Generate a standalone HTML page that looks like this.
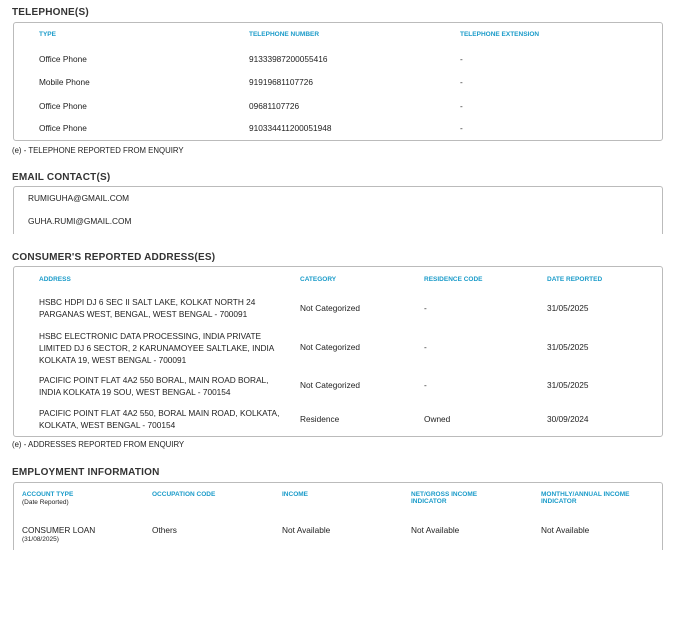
<!DOCTYPE html><html><head><style>
body{margin:0;width:676px;height:632px;background:#fff;font-family:"Liberation Sans",sans-serif;color:#222;position:relative;overflow:hidden}
div{position:absolute;white-space:nowrap}
.h{font-size:10px;font-weight:bold;letter-spacing:.2px;color:#333}
.box{border:1px solid #bbb;border-radius:3px;left:13px;width:648px}
.c{font-size:6.5px;font-weight:bold;color:#1a9bc9;line-height:7px}
.t{font-size:8.3px;line-height:12px}
.n{font-size:7.8px}
</style></head><body>
<div class="h" style="left:12px;top:7px">TELEPHONE(S)</div>
<div class="box" style="top:22px;height:117px"></div>
<div class="c" style="left:39px;top:31px">TYPE</div>
<div class="c" style="left:249px;top:31px">TELEPHONE NUMBER</div>
<div class="c" style="left:460px;top:31px">TELEPHONE EXTENSION</div>
<div class="t" style="left:39px;top:53px">Office Phone</div><div class="t" style="left:249px;top:53px">91333987200055416</div><div class="t" style="left:460px;top:53px">-</div>
<div class="t" style="left:39px;top:76px">Mobile Phone</div><div class="t" style="left:249px;top:76px">91919681107726</div><div class="t" style="left:460px;top:76px">-</div>
<div class="t" style="left:39px;top:100px">Office Phone</div><div class="t" style="left:249px;top:100px">09681107726</div><div class="t" style="left:460px;top:100px">-</div>
<div class="t" style="left:39px;top:122px">Office Phone</div><div class="t" style="left:249px;top:122px">910334411200051948</div><div class="t" style="left:460px;top:122px">-</div>
<div class="n" style="left:12px;top:146px">(e) - TELEPHONE REPORTED FROM ENQUIRY</div>

<div class="h" style="left:12px;top:172px">EMAIL CONTACT(S)</div>
<div class="box" style="top:186px;height:60px;border-bottom:none"></div>
<div class="t" style="left:28px;top:192px">RUMIGUHA@GMAIL.COM</div>
<div class="t" style="left:28px;top:215px">GUHA.RUMI@GMAIL.COM</div>
<div style="left:0;top:234px;width:676px;height:18px;background:#fff"></div>

<div class="h" style="left:12px;top:252px">CONSUMER'S REPORTED ADDRESS(ES)</div>
<div class="box" style="top:266px;height:169px"></div>
<div class="c" style="left:39px;top:276px">ADDRESS</div>
<div class="c" style="left:300px;top:276px">CATEGORY</div>
<div class="c" style="left:424px;top:276px">RESIDENCE CODE</div>
<div class="c" style="left:547px;top:276px">DATE REPORTED</div>
<div class="t" style="left:39px;top:296px">HSBC HDPI DJ 6 SEC II SALT LAKE, KOLKAT NORTH 24<br>PARGANAS WEST, BENGAL, WEST BENGAL - 700091</div>
<div class="t" style="left:300px;top:302px">Not Categorized</div><div class="t" style="left:424px;top:302px">-</div><div class="t" style="left:547px;top:302px">31/05/2025</div>
<div class="t" style="left:39px;top:330px">HSBC ELECTRONIC DATA PROCESSING, INDIA PRIVATE<br>LIMITED DJ 6 SECTOR, 2 KARUNAMOYEE SALTLAKE, INDIA<br>KOLKATA 19, WEST BENGAL - 700091</div>
<div class="t" style="left:300px;top:341px">Not Categorized</div><div class="t" style="left:424px;top:341px">-</div><div class="t" style="left:547px;top:341px">31/05/2025</div>
<div class="t" style="left:39px;top:374px">PACIFIC POINT FLAT 4A2 550 BORAL, MAIN ROAD BORAL,<br>INDIA KOLKATA 19 SOU, WEST BENGAL - 700154</div>
<div class="t" style="left:300px;top:379px">Not Categorized</div><div class="t" style="left:424px;top:379px">-</div><div class="t" style="left:547px;top:379px">31/05/2025</div>
<div class="t" style="left:39px;top:407px">PACIFIC POINT FLAT 4A2 550, BORAL MAIN ROAD, KOLKATA,<br>KOLKATA, WEST BENGAL - 700154</div>
<div class="t" style="left:300px;top:413px">Residence</div><div class="t" style="left:424px;top:413px">Owned</div><div class="t" style="left:547px;top:413px">30/09/2024</div>
<div class="n" style="left:12px;top:440px">(e) - ADDRESSES REPORTED FROM ENQUIRY</div>

<div class="h" style="left:12px;top:467px">EMPLOYMENT INFORMATION</div>
<div class="box" style="top:482px;height:75px;border-bottom:none"></div>
<div style="left:0;top:550px;width:676px;height:20px;background:#fff"></div>
<div class="c" style="left:22px;top:491px">ACCOUNT TYPE</div>
<div style="left:22px;top:499px;font-size:6.5px">(Date Reported)</div>
<div class="c" style="left:152px;top:491px">OCCUPATION CODE</div>
<div class="c" style="left:282px;top:491px">INCOME</div>
<div class="c" style="left:411px;top:491px">NET/GROSS INCOME<br>INDICATOR</div>
<div class="c" style="left:541px;top:491px">MONTHLY/ANNUAL INCOME<br>INDICATOR</div>
<div class="t" style="left:22px;top:524px">CONSUMER LOAN</div>
<div style="left:22px;top:536px;font-size:6.5px">(31/08/2025)</div>
<div class="t" style="left:152px;top:524px">Others</div>
<div class="t" style="left:282px;top:524px">Not Available</div>
<div class="t" style="left:411px;top:524px">Not Available</div>
<div class="t" style="left:541px;top:524px">Not Available</div>
</body></html>
